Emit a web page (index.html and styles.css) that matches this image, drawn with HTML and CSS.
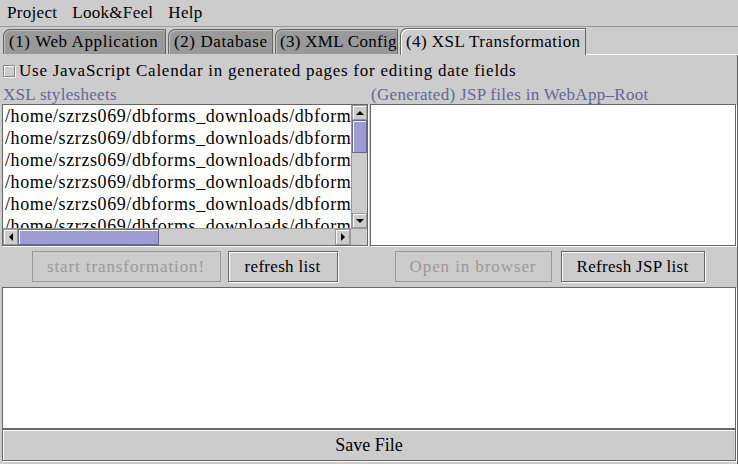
FILE: index.html
```html
<!DOCTYPE html>
<html>
<head>
<meta charset="utf-8">
<link rel="stylesheet" href="styles.css">
</head>
<body>
<div class="window">
  <div class="menubar">
    <span class="menu">Project</span>
    <span class="menu">Look&amp;Feel</span>
    <span class="menu">Help</span>
  </div>
  <div class="tabs">
    <div class="tab t1">(1) Web Application</div>
    <div class="tab t2">(2) Database</div>
    <div class="tab t3">(3) XML Config</div>
    <div class="tab t4 active">(4) XSL Transformation</div>
    <div class="tabfill"></div>
  </div>
  <div class="panel">
    <div class="check"><span class="box"></span><span>Use JavaScript Calendar in generated pages for editing date fields</span></div>
    <div class="lists">
      <div class="col">
        <div class="caption">XSL stylesheets</div>
        <div class="scrollpane">
          <div class="viewrow">
            <div class="listview">
              <div class="item">/home/szrzs069/dbforms_downloads/dbform</div>
              <div class="item">/home/szrzs069/dbforms_downloads/dbform</div>
              <div class="item">/home/szrzs069/dbforms_downloads/dbform</div>
              <div class="item">/home/szrzs069/dbforms_downloads/dbform</div>
              <div class="item">/home/szrzs069/dbforms_downloads/dbform</div>
              <div class="item">/home/szrzs069/dbforms_downloads/dbform</div>
            </div>
            <div class="vbar">
              <div class="sbtn"><span class="arr up"></span></div>
              <div class="vtrack"><div class="vthumb"></div></div>
              <div class="sbtn"><span class="arr down"></span></div>
            </div>
          </div>
          <div class="hrow">
            <div class="hbar">
              <div class="sbtn"><span class="arr left"></span></div>
              <div class="htrack"><div class="hthumb"></div></div>
              <div class="sbtn"><span class="arr right"></span></div>
            </div>
            <div class="corner"></div>
          </div>
        </div>
      </div>
      <div class="col">
        <div class="caption">(Generated) JSP files in WebApp&#8211;Root</div>
        <div class="scrollpane"></div>
      </div>
    </div>
    <div class="buttons">
      <div class="bgroup">
        <button class="btn disabled w1">start transformation!</button>
        <button class="btn w2">refresh list</button>
      </div>
      <div class="bgroup g2">
        <button class="btn disabled w3">Open in browser</button>
        <button class="btn w4">Refresh JSP list</button>
      </div>
    </div>
    <div class="textarea"></div>
    <button class="btn save">Save File</button>
  </div>
</div>
</body>
</html>
```

FILE: styles.css
```css
html, body {
  margin: 0;
  padding: 0;
  background: #cccccc;
}
body {
  font-family: "Liberation Serif", serif;
  font-size: 17px;
  letter-spacing: 0.3px;
  color: #000;
}
.window {
  width: 738px;
  height: 464px;
  display: flex;
  flex-direction: column;
  overflow: hidden;
}
.menubar {
  flex: none;
  border-bottom: 1px solid #999999;
  display: flex;
  align-items: center;
  padding-left: 7px;
  gap: 15px;
  box-sizing: border-box;
  height: 27px;
  padding-bottom: 1px;
}
.tabs {
  flex: none;
  display: flex;
  align-items: flex-end;
  padding: 0 0 0 3px;
  height: 28px;
  box-sizing: border-box;
}
.tab {
  height: 25px;
  box-sizing: border-box;
  background: #999999;
  border: 1px solid #666666;
  border-bottom: none;
  border-top-left-radius: 7px 7px;
  box-shadow: inset 1px 1px 0 #bbbbbb;
  padding: 0 0 0 5px;
  margin-right: 2px;
  margin-bottom: 1px;
  line-height: 24px;
  letter-spacing: 0.6px;
  white-space: nowrap;
  overflow: hidden;
}
.t1 { width: 163px; }
.t2 { width: 105px; }
.t3 { width: 123px; letter-spacing: 0.3px; padding-left: 4px; }
.t4 { width: 186px; }
.tab.active {
  background: #cccccc;
  height: 27px;
  box-shadow: inset 1px 1px 0 #ffffff;
  margin-right: 0;
  margin-bottom: 0;
  line-height: 26px;
  letter-spacing: 0.45px;
}
.tabfill {
  flex: 1;
  border-bottom: 1px solid #ffffff;
  align-self: stretch;
}
.panel {
  flex: 1;
  min-height: 0;
  display: flex;
  flex-direction: column;
  padding: 0 1px 3px 2px;
  border-right: 1px solid #666666;
  box-sizing: border-box;
}
.check {
  flex: none;
  display: flex;
  align-items: center;
  height: 30px;
  padding-top: 1px;
  box-sizing: border-box;
  gap: 4px;
  padding-left: 1px;
  letter-spacing: 0.75px;
}
.box {
  width: 12px;
  height: 12px;
  box-sizing: border-box;
  border: 1px solid #888888;
  box-shadow: 1px 1px 0 #ffffff, inset 1px 1px 0 #ffffff;
  background: #cccccc;
}
.lists {
  flex: none;
  display: flex;
  gap: 2px;
  height: 162px;
}
.col {
  flex: 1;
  display: flex;
  flex-direction: column;
  min-width: 0;
}
.caption {
  flex: none;
  color: #666699;
  height: 19px;
  line-height: 19px;
  padding-left: 1px;
  white-space: nowrap;
  overflow: hidden;
}
.scrollpane {
  flex: 1;
  border: 1px solid #666666;
  box-shadow: 1px 1px 0 #ffffff;
  display: flex;
  flex-direction: column;
  min-height: 0;
  background: #ffffff;
  margin-bottom: 1px;
}
.viewrow {
  flex: 1;
  display: flex;
  min-height: 0;
}
.listview {
  flex: 1;
  overflow: hidden;
  background: #fff;
  padding-left: 2px;
  min-width: 0;
}
.item {
  height: 22px;
  line-height: 22px;
  font-size: 18px;
  letter-spacing: 0.6px;
  white-space: nowrap;
}
.vbar {
  width: 15px;
  display: flex;
  flex-direction: column;
  background: #cccccc;
  border-left: 1px solid #999999;
}
.sbtn {
  width: 15px;
  height: 15px;
  box-sizing: border-box;
  background: #cccccc;
  border: 1px solid #999999;
  box-shadow: inset 1px 1px 0 #ffffff;
  display: flex;
  align-items: center;
  justify-content: center;
  flex: none;
}
.vtrack {
  flex: 1;
  background: #cccccc;
}
.vthumb {
  height: 33px;
  background-color: #ccccff;
  background-image: radial-gradient(#9999cc 0.7px, transparent 0.8px);
  background-size: 2px 2px;
  border: 1px solid #666699;
  box-sizing: border-box;
  box-shadow: inset 1px 1px 0 #ffffff;
}
.hrow {
  display: flex;
  height: 16px;
  background: #cccccc;
  border-top: 1px solid #999999;
}
.hbar {
  flex: 1;
  display: flex;
}
.htrack {
  flex: 1;
  background: #cccccc;
}
.hthumb {
  width: 141px;
  height: 100%;
  box-sizing: border-box;
  background-color: #ccccff;
  background-image: radial-gradient(#9999cc 0.7px, transparent 0.8px);
  background-size: 2px 2px;
  border: 1px solid #666699;
  box-shadow: inset 1px 1px 0 #ffffff;
}
.hbar .sbtn {
  height: 16px;
}
.corner {
  width: 16px;
  background: #cccccc;
  border-left: 1px solid #999999;
}
.arr {
  width: 0;
  height: 0;
  border: 4px solid transparent;
}
.arr.up { border-bottom-color: #000; border-top-width: 0; }
.arr.down { border-top-color: #000; border-bottom-width: 0; }
.arr.left { border-right-color: #000; border-left-width: 0; }
.arr.right { border-left-color: #000; border-right-width: 0; }
.buttons {
  flex: none;
  display: flex;
  height: 39px;
  align-items: center;
  box-sizing: border-box;
}
.bgroup {
  flex: 1;
  display: flex;
  justify-content: center;
  gap: 7px;
}
.bgroup.g2 {
  gap: 9px;
  padding-right: 4px;
}
.btn {
  font-family: "Liberation Serif", serif;
  font-size: 17px;
  letter-spacing: 0.3px;
  height: 31px;
  background: #cccccc;
  border: 1px solid #666666;
  box-shadow: inset 1px 1px 0 #ffffff, 1px 1px 0 #ffffff;
  color: #000;
  padding: 0;
  margin: 0;
}
.btn.disabled {
  color: #999999;
  border-color: #999999;
  box-shadow: none;
  letter-spacing: 0.9px;
}
.w1 { width: 189px; }
.w2 { width: 110px; }
.w3 { width: 157px; }
.w4 { width: 144px; }
.textarea {
  flex: none;
  height: 142px;
  box-sizing: border-box;
  background: #ffffff;
  border: 1px solid #666666;
  box-shadow: 1px 1px 0 #ffffff;
  margin-top: 1px;
}
.save {
  flex: none;
  margin-top: 0;
  height: 32px;
  width: 100%;
  font-size: 18px;
  letter-spacing: 0;
}
```
